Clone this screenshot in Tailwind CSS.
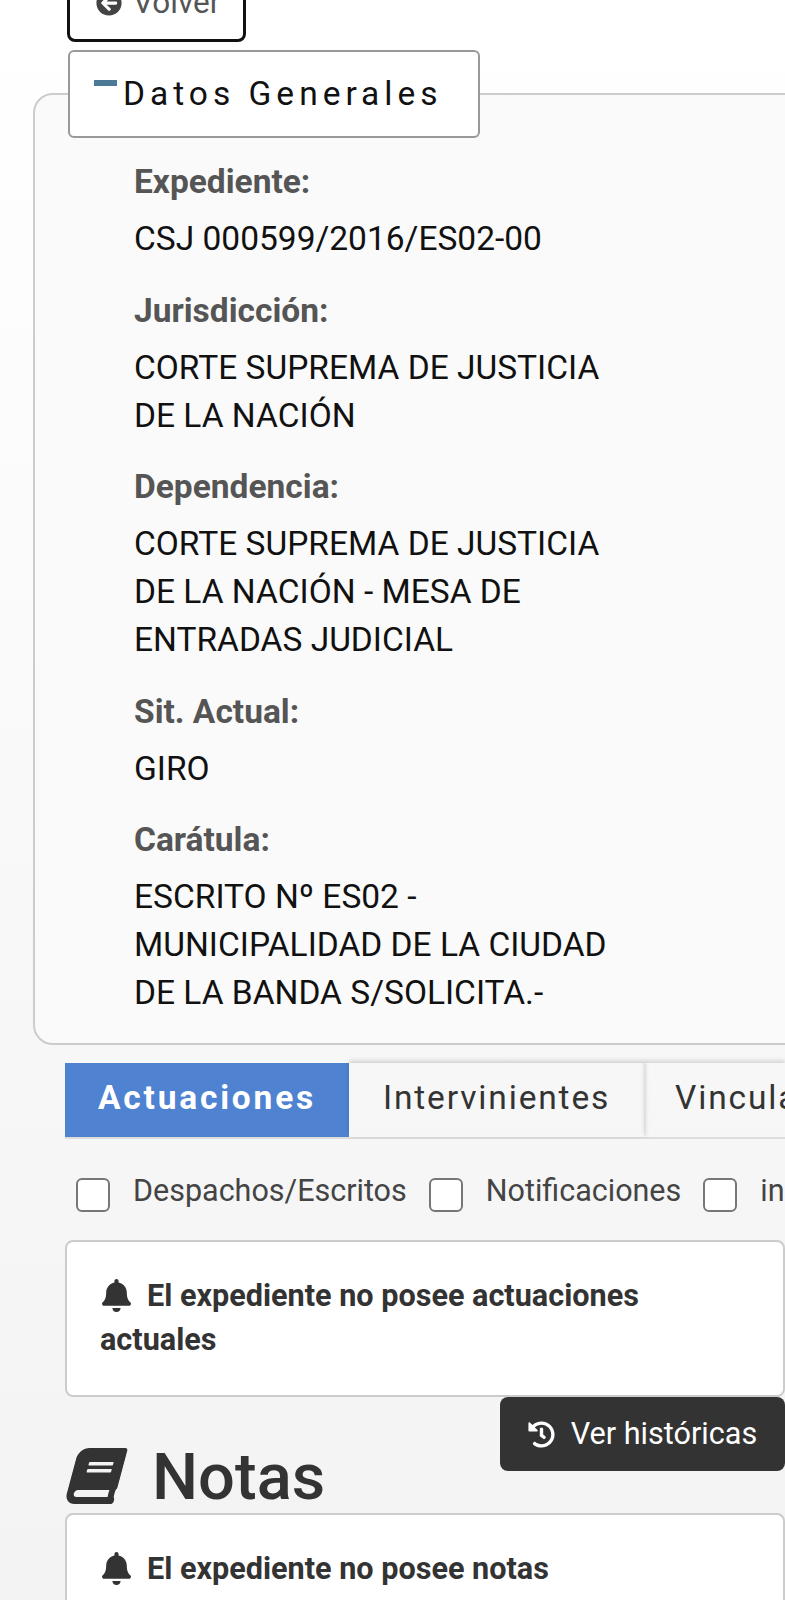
<!DOCTYPE html>
<html lang="es">
<head>
<meta charset="utf-8">
<title>Expediente</title>
<script src="https://cdn.jsdelivr.net/npm/@tailwindcss/browser@4"></script>
</head>
<body class="m-0">
<div class="w-[785px] h-[1600px] overflow-hidden bg-linear-to-b from-white to-[#f3f3f3] font-['Roboto',sans-serif] text-[#111]">
  <a class="-mt-[45px] ml-[67px] flex items-center w-[179px] h-[87px] border-[3px] border-[#111] rounded-lg bg-white pl-[26px] pt-[9px] gap-[11px] text-[31.5px] text-[#555]">
    <svg viewBox="0 0 512 512" class="w-[26px] h-[26px] fill-[#444]"><path d="M256 504C119 504 8 393 8 256S119 8 256 8s248 111 248 248-111 248-248 248zm28.9-143.6L209.4 288H392c13.3 0 24-10.7 24-24v-16c0-13.3-10.7-24-24-24H209.4l75.5-72.4c10.1-9.7 10.3-25.8.4-35.7l-11-10.9c-9.4-9.4-24.6-9.4-33.9 0L107.7 239c-9.4 9.4-9.4 24.6 0 33.9l132.7 132.7c9.4 9.4 24.6 9.4 33.9 0l11-11c9.8-10 9.6-26.1-.4-35.8z"/></svg>
    <span>Volver</span>
  </a>
  <fieldset class="mt-[8px] ml-[33px] w-[900px] border-2 border-[#ccc] rounded-[20px] bg-[#fafafa] pb-[26px] pl-[99px]">
    <legend class="-ml-[66px] w-[412px] h-[88px] border-2 border-[#999] rounded-md bg-white flex items-center pl-[24px] text-[33.5px] tracking-[5px] leading-none">
      <span class="w-[23px] h-[6px] bg-[#4a7a96] -mt-[22px] mr-[6px]"></span><span>Datos Generales</span>
    </legend>
    <div class="pt-[20px] w-[490px] text-[33.5px] leading-[48px]">
      <h3 class="font-bold text-[#555] text-[33.5px] mb-[9px]">Expediente:</h3>
      <p class="mb-[23.5px]">CSJ 000599/2016/ES02-00</p>
      <h3 class="font-bold text-[#555] text-[33.5px] mb-[9px]">Jurisdicción:</h3>
      <p class="mb-[23.5px]">CORTE SUPREMA DE JUSTICIA DE LA NACIÓN</p>
      <h3 class="font-bold text-[#555] text-[33.5px] mb-[9px]">Dependencia:</h3>
      <p class="mb-[23.5px]">CORTE SUPREMA DE JUSTICIA DE LA NACIÓN - MESA DE ENTRADAS JUDICIAL</p>
      <h3 class="font-bold text-[#555] text-[33.5px] mb-[9px]">Sit. Actual:</h3>
      <p class="mb-[23.5px]">GIRO</p>
      <h3 class="font-bold text-[#555] text-[33.5px] mb-[9px]">Carátula:</h3>
      <p>ESCRITO Nº ES02 - MUNICIPALIDAD DE LA CIUDAD DE LA BANDA S/SOLICITA.-</p>
    </div>
  </fieldset>

  <div class="ml-[65px] w-[720px] mt-[18px]">
    <div class="flex h-[76px] w-[720px] border-b-2 border-[#ddd] text-[33.5px] whitespace-nowrap">
      <div class="w-[284px] shrink-0 bg-[#4f82d0] text-white font-bold tracking-[2.8px] pb-[4px] flex items-center justify-center">Actuaciones</div>
      <div class="w-[295px] shrink-0 flex items-center pl-[34px] pb-[4px] text-[#333] tracking-[1.85px] shadow-[0_-3px_4px_rgba(0,0,0,0.12),3px_0_3px_rgba(0,0,0,0.06)]">Intervinientes</div>
      <div class="w-[141px] overflow-hidden shrink-0 flex items-center pl-[31px] pb-[4px] text-[#333] tracking-[1.85px] shadow-[0_-3px_4px_rgba(0,0,0,0.12)]">Vinculados</div>
    </div>
    <div class="flex items-center h-[101px] pl-[11px] text-[30.5px] text-[#444] whitespace-nowrap overflow-hidden">
      <span class="w-[34px] h-[34px] shrink-0 rounded-md border-2 border-[#777] bg-white mt-[11px]"></span>
      <span class="ml-[23px] mr-[22px] mt-[2px]">Despachos/Escritos</span>
      <span class="w-[34px] h-[34px] shrink-0 rounded-md border-2 border-[#777] bg-white mt-[11px]"></span>
      <span class="ml-[23px] mr-[22px] mt-[2px]">Notificaciones</span>
      <span class="w-[34px] h-[34px] shrink-0 rounded-md border-2 border-[#777] bg-white mt-[11px]"></span>
      <span class="ml-[23px] mt-[2px]">in</span>
    </div>
    <div class="h-[157px] border-2 border-[#ccc] rounded-lg bg-white pt-[32px] px-[33px] text-[30.6px] leading-[44px] font-bold text-[#333]">
      <svg viewBox="0 0 448 512" class="inline-block w-[29px] h-[33px] fill-[#333] ml-[2px] mr-[16px] -mt-[4px] align-middle"><path d="M224 512c35.32 0 63.97-28.65 63.97-64H160.03c0 35.35 28.65 64 63.97 64zm215.39-149.71c-19.32-20.76-55.47-51.99-55.47-154.29 0-77.7-54.48-139.9-127.94-155.16V32c0-17.67-14.32-32-31.98-32s-31.98 14.33-31.98 32v20.84C118.56 68.1 64.08 130.3 64.08 208c0 102.3-36.15 133.53-55.47 154.29-6 6.45-8.66 14.16-8.61 21.71.11 16.4 12.98 32 32.1 32h383.8c19.12 0 32-15.6 32.1-32 .05-7.55-2.61-15.27-8.61-21.71z"/></svg>El expediente no posee actuaciones actuales
    </div>
    <div class="flex justify-end">
      <button class="w-[285px] h-[74px] bg-[#333] rounded-lg text-white text-[30.6px] flex items-center justify-center gap-[16px]">
        <svg viewBox="0 0 512 512" class="w-[27px] h-[27px] fill-white"><path d="M504 255.531c.253 136.64-111.18 248.372-247.82 248.468-59.015.042-113.223-20.53-155.822-54.911-11.077-8.94-11.905-25.541-1.839-35.607l11.267-11.267c8.609-8.609 22.353-9.551 31.891-1.984C173.062 425.135 212.781 440 256 440c101.705 0 184-82.311 184-184 0-101.705-82.311-184-184-184-48.814 0-93.149 18.969-126.068 49.932l50.754 50.754c10.08 10.08 2.941 27.314-11.313 27.314H24c-8.837 0-16-7.163-16-16V38.627c0-14.254 17.234-21.393 27.314-11.314l49.372 49.372C129.209 34.136 189.552 8 256 8c136.81 0 247.747 110.78 248 247.531zm-180.912 78.784l9.823-12.63c8.138-10.463 6.253-25.542-4.21-33.679L288 256.349V152c0-13.255-10.745-24-24-24h-16c-13.255 0-24 10.745-24 24v135.651l65.409 50.874c10.463 8.137 25.541 6.253 33.679-4.21z"/></svg>
        <span>Ver históricas</span>
      </button>
    </div>
    <h2 class="-mt-[29px] h-[70px] flex items-center gap-[31px] text-[65px] font-medium leading-none text-[#333]">
      <svg viewBox="0 0 448 512" class="w-[50px] h-[56px] fill-[#333] -skew-x-[15deg] ml-[6px] -mt-[2px]"><path d="M448 360V24c0-13.3-10.7-24-24-24H96C43 0 0 43 0 96v320c0 53 43 96 96 96h328c13.3 0 24-10.7 24-24v-16c0-7.5-3.5-14.3-8.9-18.7-4.2-15.4-4.2-59.3 0-74.7 5.4-4.3 8.9-11.1 8.9-18.6zM128 134c0-3.3 2.7-6 6-6h212c3.3 0 6 2.7 6 6v20c0 3.3-2.7 6-6 6H134c-3.3 0-6-2.7-6-6v-20zm0 64c0-3.3 2.7-6 6-6h212c3.3 0 6 2.7 6 6v20c0 3.3-2.7 6-6 6H134c-3.3 0-6-2.7-6-6v-20zm253.4 250H96c-17.7 0-32-14.3-32-32 0-17.6 14.4-32 32-32h285.4c-1.9 17.1-1.9 46.9 0 64z"/></svg>
      <span>Notas</span>
    </h2>
    <div class="h-[156px] mt-[1px] border-2 border-[#ccc] rounded-lg bg-white pt-[32px] px-[33px] text-[30.6px] leading-[44px] font-bold text-[#333]">
      <svg viewBox="0 0 448 512" class="inline-block w-[29px] h-[33px] fill-[#333] ml-[2px] mr-[16px] -mt-[4px] align-middle"><path d="M224 512c35.32 0 63.97-28.65 63.97-64H160.03c0 35.35 28.65 64 63.97 64zm215.39-149.71c-19.32-20.76-55.47-51.99-55.47-154.29 0-77.7-54.48-139.9-127.94-155.16V32c0-17.67-14.32-32-31.98-32s-31.98 14.33-31.98 32v20.84C118.56 68.1 64.08 130.3 64.08 208c0 102.3-36.15 133.53-55.47 154.29-6 6.45-8.66 14.16-8.61 21.71.11 16.4 12.98 32 32.1 32h383.8c19.12 0 32-15.6 32.1-32 .05-7.55-2.61-15.27-8.61-21.71z"/></svg>El expediente no posee notas
    </div>
  </div>
</div>
</body>
</html>
